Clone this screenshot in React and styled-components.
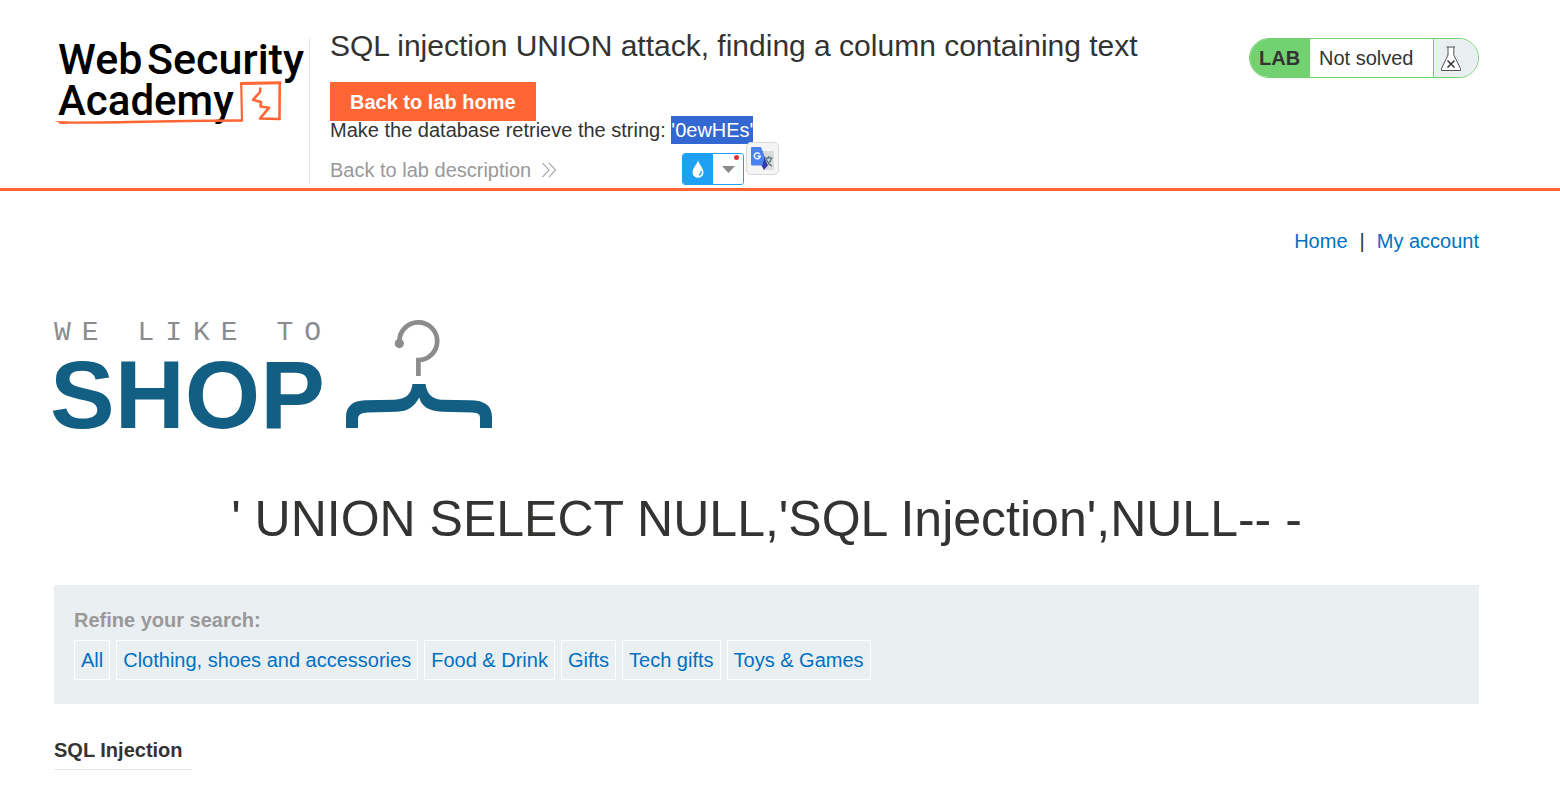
import React from 'react';
import styled, { createGlobalStyle } from 'styled-components';

const GlobalStyle = createGlobalStyle`
  *, *::before, *::after { box-sizing: border-box; }
  body {
    margin: 0;
    background: #fff;
    color: #333332;
    font-family: "Liberation Sans", Arial, sans-serif;
    font-size: 20px;
    line-height: 24px;
  }
  a { color: #0071c2; text-decoration: none; }
`;

const Header = styled.header`
  border-bottom: 3px solid #ff6633;
`;

const Container = styled.div`
  padding: 0 81px 0 54px;
`;

const HeaderRow = styled(Container)`
  display: flex;
  align-items: stretch;
  padding-top: 28px;
  padding-bottom: 4px;
`;

const LogoLink = styled.a`
  flex: none;
  display: block;
  margin-top: 10px;
  padding-right: 5px;
  border-right: 1px solid #e5e5e5;
  svg { display: block; overflow: visible; }
`;

const LabInfo = styled.div`
  flex: 1;
  display: flex;
  flex-direction: column;
  align-items: flex-start;
  padding-left: 20px;
`;

const LabTitle = styled.h2`
  margin: 0 0 18px;
  font-size: 30px;
  font-weight: 400;
  line-height: 36px;
`;

const HomeButton = styled.button`
  height: 39px;
  padding: 0 20px;
  border: 0;
  background: #ff6633;
  color: #fff;
  font: inherit;
  font-weight: 700;
`;

const Hint = styled.p`
  margin: 0;
  line-height: 18px;
`;

const Selection = styled.span`
  position: relative;
  display: inline-block;
  background: #3367d1;
  color: #fff;
  line-height: 28px;
  margin: -5px 0;
`;

const DescriptionLink = styled.a`
  display: flex;
  align-items: center;
  gap: 10px;
  margin: 19px 0 2px;
  color: #999;
`;

const DropperTool = styled.span`
  position: absolute;
  top: 37px;
  left: 11px;
  display: flex;
  width: 62px;
  height: 32px;
  border: 1px solid #1da1f2;
  border-radius: 3px;
  background: #fff;
  overflow: hidden;
`;

const ToolButton = styled.button`
  display: flex;
  flex: 1;
  align-items: center;
  justify-content: center;
  padding: 0;
  border: 0;
  background: ${(p) => (p.$filled ? '#1da1f2' : '#fff')};
`;

const Dot = styled.span`
  position: absolute;
  top: 1px;
  right: 4px;
  width: 5px;
  height: 5px;
  border-radius: 50%;
  background: #e8303a;
`;

const TranslateButton = styled.button`
  position: absolute;
  top: 26px;
  left: 75px;
  display: flex;
  align-items: center;
  justify-content: center;
  width: 33px;
  height: 33px;
  padding: 0;
  border: 1px solid #d8d8d8;
  border-radius: 5px;
  background: #f5f5f5;
`;

const Status = styled.div`
  flex: none;
  display: flex;
  align-items: stretch;
  width: 230px;
  height: 40px;
  margin-top: 10px;
  border: 1px solid #71d26f;
  border-radius: 20px;
  overflow: hidden;
  line-height: 38px;
`;

const StatusTag = styled.span`
  width: 60px;
  padding-left: 9px;
  background: #71d26f;
  font-weight: 700;
`;

const StatusText = styled.span`
  flex: 1;
  padding-left: 9px;
`;

const StatusIcon = styled.span`
  display: flex;
  align-items: center;
  width: 45px;
  padding-left: 6px;
  border-left: 1px solid #71d26f;
  background: #eaeff2;
`;

const TopNav = styled.nav`
  display: flex;
  justify-content: flex-end;
  gap: 12px;
  padding-top: 38px;
`;

const ShopBanner = styled.div`
  padding-top: 65px;
  svg { display: block; overflow: visible; }
`;

const Query = styled.h1`
  margin: 59px 0 36px;
  font-size: 50px;
  font-weight: 400;
  line-height: 60px;
  text-align: center;
`;

const Filters = styled.section`
  padding: 23px 20px 24px;
  background: #eaeff2;
`;

const FilterLabel = styled.h3`
  margin: 0 0 8px;
  color: #999;
  font-size: 20px;
  line-height: 24px;
`;

const FilterList = styled.div`
  display: flex;
  flex-wrap: wrap;
  gap: 6px;
`;

const FilterLink = styled.a`
  padding: 0 6px;
  border: 1px solid #fff;
  line-height: 38px;
`;

const Results = styled.table`
  margin-top: 34px;
  border-collapse: collapse;
  th {
    padding: 0 9px 7px 0;
    border-bottom: 1px solid #e5e5e5;
    text-align: left;
  }
`;

const filters = ['All', 'Clothing, shoes and accessories', 'Food & Drink', 'Gifts', 'Tech gifts', 'Toys & Games'];

const AcademyLogo = () => (
  <svg width="250" height="90" viewBox="54 38 250 90" role="img" aria-label="Web Security Academy">
    <g fontFamily="Roboto, sans-serif" fontWeight="500" fill="#000">
      <text x="58" y="74" fontSize="43">Web</text>
      <text x="147" y="74" fontSize="43">Security</text>
      <text x="58" y="115" fontSize="42">Academy</text>
    </g>
    <g fill="none" stroke="#ff6633" strokeLinecap="round" strokeLinejoin="round">
      <path d="M60 122.600 C110 123 170 120.500 242 120.500" strokeWidth="2.400" />
      <path d="M242 120.500 L241.200 83.500" strokeWidth="2.200" />
      <path d="M241.200 83.500 L280 82.700" strokeWidth="3" />
      <path d="M279.700 83 L279.500 118.500" strokeWidth="2.600" />
      <path d="M260.300 88.500 L260 92 L253 99.800 L261 102 L260.500 106.500 L269 107.800 L260 118.500 L279.500 119" strokeWidth="2.600" />
    </g>
    <path d="M54.500 121 L68 121.500 L68 124 L62 123.500 Z" fill="#ff6633" />
  </svg>
);

const ShopLogo = () => (
  <svg width="440" height="112" viewBox="54 318 440 112" role="img" aria-label="We like to shop">
    <text x="54" y="340" fontFamily="Liberation Mono, monospace" fontSize="28" letterSpacing="11" fill="#8b8c8e">WE LIKE TO</text>
    <text x="50" y="428" fontFamily="Liberation Sans, sans-serif" fontWeight="700" fontSize="97" fill="#125f83">SHOP</text>
    <circle cx="399.300" cy="343.600" r="4.600" fill="#8b8c8e" />
    <path d="M399.400 341.700 A18.900 18.900 0 1 1 418.400 360.100 V376" fill="none" stroke="#8b8c8e" strokeWidth="4.700" />
    <path
      d="M412.500 384 H425.500 C427 394 432 399 441 399.700 L470 400.300 C485 400.300 492 406 492 417 V428 H480 V418 C480 414 478 412.600 472 412.400 L442 411.700 C429 411.300 421 406 419.300 397.500 C414 407 408 411.300 397 411.700 L368 412.600 C360 413 358 415 358 420 V428 H346 V417 C346 406 353 400.800 365 400.300 L394 399.700 C406 399 411 395 412.500 384 Z"
      fill="#125f83"
    />
  </svg>
);

const FlaskIcon = () => (
  <svg width="22" height="28" viewBox="0 0 22 28" aria-hidden="true">
    <path d="M8 3 H14 V11 L20 25 V26.500 H2 V25 L8 11 Z" fill="#fff" />
    <path d="M6.500 3 H15 M8 3 V11 L1.500 24.500 V26.500 H20.500 V24.500 L13.800 11 V3" fill="none" stroke="#555" strokeWidth="1" />
    <path d="M7.500 16.500 L14.500 23.500 M14.500 16.500 L7.500 23.500" stroke="#333" strokeWidth="1.500" />
  </svg>
);

const TranslateIcon = () => (
  <svg width="25" height="25" viewBox="0 0 25 25" aria-hidden="true">
    <path d="M9 5 H23 Q24 5 24 6 V23 Q24 24 23 24 H14 Z" fill="#dcdcdc" />
    <path d="M15 12 H22.500 M18.800 10 V12 M21.500 12 C20.500 16 18 18.500 15 20 M16.500 13 C17.500 16.500 19.500 19 22 20" stroke="#607d8b" strokeWidth="1.400" fill="none" />
    <path d="M12 4 L17.700 19.500 L14 24 L11.500 19.500 Z" fill="#3538a8" />
    <path d="M2 1 H11 L14.500 11 L12.500 19.500 H2 Q1 19.500 1 18.500 V2 Q1 1 2 1 Z" fill="#4b83ee" />
    <path d="M9.700 8 A3 3 0 1 0 10.300 10.200 H7.600" stroke="#fff" strokeWidth="1.400" fill="none" />
  </svg>
);

export default function App() {
  return (
    <>
      <GlobalStyle />
      <Header>
        <HeaderRow>
          <LogoLink href="#academy"><AcademyLogo /></LogoLink>
          <LabInfo>
            <LabTitle>SQL injection UNION attack, finding a column containing text</LabTitle>
            <HomeButton type="button">Back to lab home</HomeButton>
            <Hint>
              Make the database retrieve the string:{' '}
              <Selection>
                '0ewHEs'
                <DropperTool>
                  <ToolButton type="button" $filled aria-label="Look up selection">
                    <svg width="12" height="18" viewBox="0 0 12 18" aria-hidden="true">
                      <path d="M6 0 C6.500 4 11.500 8 11.500 12.500 A5.500 5.300 0 0 1 .5 12.500 C.5 8 5.500 4 6 0 Z" fill="#fff" />
                      <path d="M9.300 11 Q9.500 14.500 7 15.300" fill="none" stroke="#1da1f2" strokeWidth="1.200" />
                    </svg>
                  </ToolButton>
                  <ToolButton type="button" aria-label="More options">
                    <svg width="13" height="7" viewBox="0 0 13 7" aria-hidden="true">
                      <path d="M0 0 H13 L6.500 7 Z" fill="#8a8a8a" />
                    </svg>
                  </ToolButton>
                  <Dot />
                </DropperTool>
                <TranslateButton type="button" aria-label="Translate"><TranslateIcon /></TranslateButton>
              </Selection>
            </Hint>
            <DescriptionLink href="#description">
              Back to lab description
              <svg width="16" height="16" viewBox="0 0 16 16" aria-hidden="true">
                <path d="M1.500 1 L8 8 L1.500 15 M8 1 L14.500 8 L8 15" fill="none" stroke="#999" strokeWidth="1.100" />
              </svg>
            </DescriptionLink>
          </LabInfo>
          <Status>
            <StatusTag>LAB</StatusTag>
            <StatusText>Not solved</StatusText>
            <StatusIcon><FlaskIcon /></StatusIcon>
          </Status>
        </HeaderRow>
      </Header>
      <Container as="main">
        <TopNav>
          <a href="#home">Home</a>
          <span>|</span>
          <a href="#account">My account</a>
        </TopNav>
        <ShopBanner><ShopLogo /></ShopBanner>
        <Query>' UNION SELECT NULL,'SQL Injection',NULL-- -</Query>
        <Filters>
          <FilterLabel>Refine your search:</FilterLabel>
          <FilterList>
            {filters.map((name) => (
              <FilterLink key={name} href="#filter">{name}</FilterLink>
            ))}
          </FilterList>
        </Filters>
        <Results>
          <tbody>
            <tr><th scope="row">SQL Injection</th></tr>
          </tbody>
        </Results>
      </Container>
    </>
  );
}
